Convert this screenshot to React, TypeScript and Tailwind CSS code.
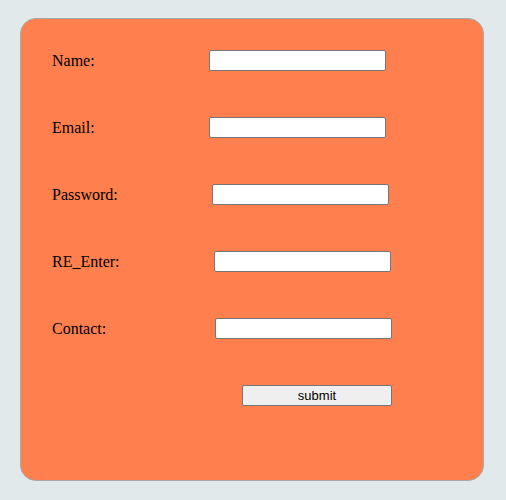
import React from "react";

const rows = [
  { label: "Name:", w: "w-[157px]" },
  { label: "Email:", w: "w-[157px]" },
  { label: "Password:", w: "w-[160px]" },
  { label: "RE_Enter:", w: "w-[162px]" },
  { label: "Contact:", w: "w-[163px]" },
];

export default function App() {
  return (
    <div className="w-[506px] h-[500px] bg-[#e1e9ea] pt-[18px] pl-[20px]">
      <div className="w-[464px] h-[463px] bg-[#ff7f4f] border border-[#a8a8a8] rounded-[16px] pt-[31px] pl-[31px] flex flex-col gap-[46px] [font-family:'Liberation_Serif',serif] text-[16px] text-black">
        {rows.map((r) => (
          <div key={r.label} className="flex items-center h-[21px]">
            <span className={`${r.w} shrink-0 leading-none`}>{r.label}</span>
            <input
              type="text"
              className="w-[177px] h-[21px] bg-white border border-[#767676] rounded-[2px] outline-none"
            />
          </div>
        ))}
        <div className="flex items-center h-[21px]">
          <span className="w-[190px] shrink-0" />
          <button className="w-[150px] h-[21px] bg-[#efefef] border border-[#767676] rounded-[2px] [font-family:'Liberation_Sans',Arial,sans-serif] text-[13px] leading-none text-black">
            submit
          </button>
        </div>
      </div>
    </div>
  );
}
